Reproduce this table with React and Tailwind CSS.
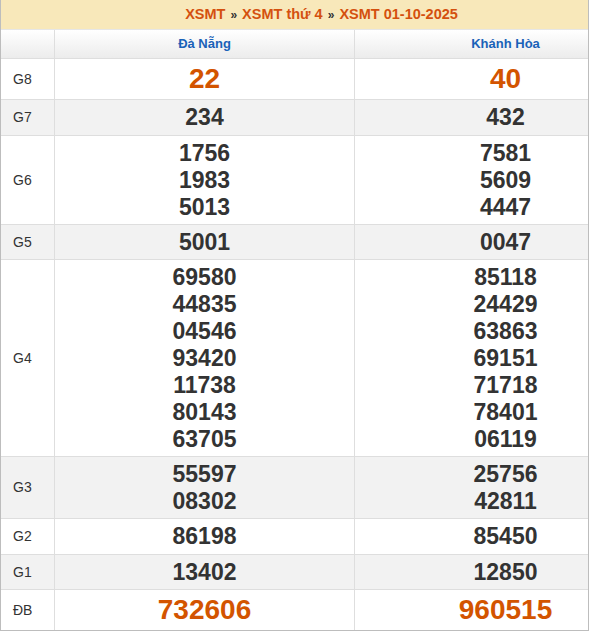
import React from "react";

const rows = [
  { label: "G8", a: ["22"], b: ["40"], big: true, h: "h-[41px]", bg: "bg-white" },
  { label: "G7", a: ["234"], b: ["432"], h: "h-[36px]", bg: "bg-[#f2f2f2]" },
  { label: "G6", a: ["1756", "1983", "5013"], b: ["7581", "5609", "4447"], h: "h-[89px]", bg: "bg-white" },
  { label: "G5", a: ["5001"], b: ["0047"], h: "h-[35px]", bg: "bg-[#f2f2f2]" },
  {
    label: "G4",
    a: ["69580", "44835", "04546", "93420", "11738", "80143", "63705"],
    b: ["85118", "24429", "63863", "69151", "71718", "78401", "06119"],
    h: "h-[197px]",
    bg: "bg-white",
  },
  { label: "G3", a: ["55597", "08302"], b: ["25756", "42811"], h: "h-[62px]", bg: "bg-[#f2f2f2]" },
  { label: "G2", a: ["86198"], b: ["85450"], h: "h-[36px]", bg: "bg-white" },
  { label: "G1", a: ["13402"], b: ["12850"], h: "h-[35px]", bg: "bg-[#f2f2f2]" },
  { label: "ĐB", a: ["732606"], b: ["960515"], big: true, h: "h-[40px]", bg: "bg-white" },
];

function Nums({ list, big }) {
  return (
    <div className="flex flex-col items-center justify-center">
      {list.map((n, i) =>
        big ? (
          <div key={i} className="text-[28px] leading-[32px] font-bold text-[#d35400]">
            {n}
          </div>
        ) : (
          <div key={i} className="text-[23px] leading-[27px] font-bold text-[#333333]">
            {n}
          </div>
        )
      )}
    </div>
  );
}

export default function App() {
  return (
    <div
      className="w-[590px] h-[631px] bg-white overflow-hidden"
      style={{ fontFamily: '"Liberation Sans", Arial, sans-serif' }}
    >
      <div className="w-[589px] border-l border-r border-b border-[#bdbdbd] overflow-hidden">
        <div className="w-[655px]">
          <div className="h-[30px] bg-[#f8e8ba] border-b border-[#e6e6e6] w-[655px]">
            <div className="w-[641px] h-full flex items-center justify-center text-[14.5px] font-bold">
              <span className="text-[#d4500f]">XSMT</span>
              <span className="text-[#333] mx-[5px] text-[12px]">»</span>
              <span className="text-[#d4500f]">XSMT thứ 4</span>
              <span className="text-[#333] mx-[5px] text-[12px]">»</span>
              <span className="text-[#d4500f]">XSMT 01-10-2025</span>
            </div>
          </div>
          <div className="grid grid-cols-[54px_300px_301px] h-[29px] bg-gradient-to-b from-[#ffffff] to-[#ececec] border-b border-[#dedede]">
            <div className="border-r border-[#dedede]"></div>
            <div className="border-r border-[#dedede] flex items-center justify-center text-[13px] font-bold text-[#1a62b8]">
              Đà Nẵng
            </div>
            <div className="flex items-center justify-center text-[13px] font-bold text-[#1a62b8]">
              Khánh Hòa
            </div>
          </div>
          {rows.map((r, i) => (
            <div
              key={r.label}
              className={`grid grid-cols-[54px_300px_301px] ${r.h} ${r.bg} ${
                i < rows.length - 1 ? "border-b border-[#dedede]" : ""
              }`}
            >
              <div className="border-r border-[#dedede] flex items-center pl-[12px] text-[14px] text-[#333]">
                {r.label}
              </div>
              <div className="border-r border-[#dedede] flex items-center justify-center">
                <Nums list={r.a} big={r.big} />
              </div>
              <div className="flex items-center justify-center">
                <Nums list={r.b} big={r.big} />
              </div>
            </div>
          ))}
        </div>
      </div>
    </div>
  );
}
